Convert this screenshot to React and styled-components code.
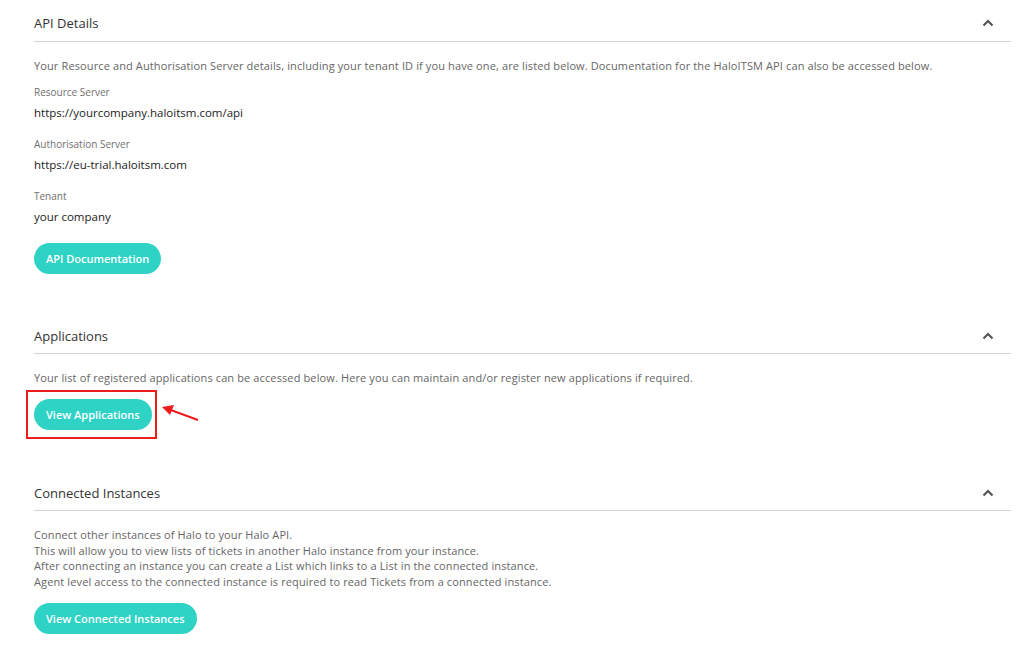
import React from 'react';
import styled, { createGlobalStyle } from 'styled-components';

const GlobalStyle = createGlobalStyle`
  html, body {
    margin: 0;
    padding: 0;
    background: #ffffff;
  }
  body {
    font-family: "Open Sans", "Liberation Sans", sans-serif;
    -webkit-font-smoothing: antialiased;
  }
`;

const Page = styled.div`
  width: 1024px;
  height: 655px;
  overflow: hidden;
  padding: 1px 13px 0 34px;
  box-sizing: border-box;
  display: flex;
  flex-direction: column;
`;

const Section = styled.section`
  display: flex;
  flex-direction: column;
  margin-top: ${props => props.$gap || 0}px;
`;

const SectionHeader = styled.div`
  display: flex;
  align-items: center;
  justify-content: space-between;
  padding: 12px 0 ${props => props.$bottom || 8}px;
  border-bottom: 1px solid #d6d6d6;
`;

const SectionTitle = styled.h2`
  margin: 0;
  font-size: 13px;
  line-height: 20px;
  font-weight: 400;
  color: #333333;
`;

const Chevron = styled.button`
  background: none;
  border: none;
  padding: 0;
  margin-right: 17px;
  display: flex;
  align-items: center;
  justify-content: center;
  color: #555555;
  cursor: pointer;
`;

const Description = styled.p`
  margin: ${props => props.$top || 16}px 0 0;
  font-size: 11px;
  line-height: 15.5px;
  letter-spacing: 0.12px;
  color: #666666;
`;

const Field = styled.div`
  display: flex;
  flex-direction: column;
  gap: 6px;
  margin-top: ${props => props.$top || 16}px;
`;

const FieldLabel = styled.span`
  font-size: 10px;
  line-height: 14px;
  color: #707070;
`;

const FieldValue = styled.span`
  font-size: 11.5px;
  line-height: 16px;
  color: #222222;
`;

const PillButton = styled.button`
  align-self: flex-start;
  height: 31px;
  padding: 0 ${props => props.$pad || 12}px;
  margin-top: ${props => props.$top || 18}px;
  background: #2ed3c5;
  color: #ffffff;
  border: none;
  border-radius: 16px;
  font-family: inherit;
  font-size: 11px;
  font-weight: 600;
  cursor: pointer;
  white-space: nowrap;
`;

const Annotated = styled.div`
  position: relative;
  align-self: flex-start;
  display: flex;
`;

const Highlight = styled.div`
  position: absolute;
  left: -8px;
  right: -5px;
  top: 5px;
  bottom: -9px;
  border: 2px solid #ee1c1c;
  pointer-events: none;
`;

const Arrow = styled.svg`
  position: absolute;
  left: calc(100% + 10px);
  top: 20px;
  overflow: visible;
`;

const ChevronIcon = () => (
  <svg width="12" height="8" viewBox="0 0 12 8">
    <path d="M1.5 6.5 L6 2 L10.5 6.5" fill="none" stroke="currentColor" strokeWidth="2.2" />
  </svg>
);

const SectionBlock = ({ title, gap, headerBottom, children }) => (
  <Section $gap={gap}>
    <SectionHeader $bottom={headerBottom}>
      <SectionTitle>{title}</SectionTitle>
      <Chevron type="button" aria-label="Collapse">
        <ChevronIcon />
      </Chevron>
    </SectionHeader>
    {children}
  </Section>
);

const serverFields = [
  { label: 'Resource Server', value: 'https://yourcompany.haloitsm.com/api', top: 11 },
  { label: 'Authorisation Server', value: 'https://eu-trial.haloitsm.com' },
  { label: 'Tenant', value: 'your company' },
];

const connectedLines = [
  'Connect other instances of Halo to your Halo API.',
  'This will allow you to view lists of tickets in another Halo instance from your instance.',
  'After connecting an instance you can create a List which links to a List in the connected instance.',
  'Agent level access to the connected instance is required to read Tickets from a connected instance.',
];

const App = () => {
  return (
    <>
      <GlobalStyle />
      <Page>
        <SectionBlock title="API Details" headerBottom={8}>
          <Description>
            Your Resource and Authorisation Server details, including your tenant ID if you have one, are listed below. Documentation for the HaloITSM API can also be accessed below.
          </Description>
          {serverFields.map(field => (
            <Field key={field.label} $top={field.top}>
              <FieldLabel>{field.label}</FieldLabel>
              <FieldValue>{field.value}</FieldValue>
            </Field>
          ))}
          <PillButton type="button">API Documentation</PillButton>
        </SectionBlock>

        <SectionBlock title="Applications" gap={40} headerBottom={7}>
          <Description $top={16}>
            Your list of registered applications can be accessed below. Here you can maintain and/or register new applications if required.
          </Description>
          <Annotated>
            <PillButton type="button" $top={14}>View Applications</PillButton>
            <Highlight />
            <Arrow width="40" height="20" viewBox="0 0 40 20">
              <line x1="36" y1="15" x2="6" y2="4" stroke="#ee1c1c" strokeWidth="2" />
              <path d="M0 2 L12 0 L8 10 Z" fill="#ee1c1c" />
            </Arrow>
          </Annotated>
        </SectionBlock>

        <SectionBlock title="Connected Instances" gap={41} headerBottom={7}>
          <Description $top={16}>
            {connectedLines.map(line => (
              <React.Fragment key={line}>
                {line}
                <br />
              </React.Fragment>
            ))}
          </Description>
          <PillButton type="button" $top={14}>View Connected Instances</PillButton>
        </SectionBlock>
      </Page>
    </>
  );
};

export default App;
